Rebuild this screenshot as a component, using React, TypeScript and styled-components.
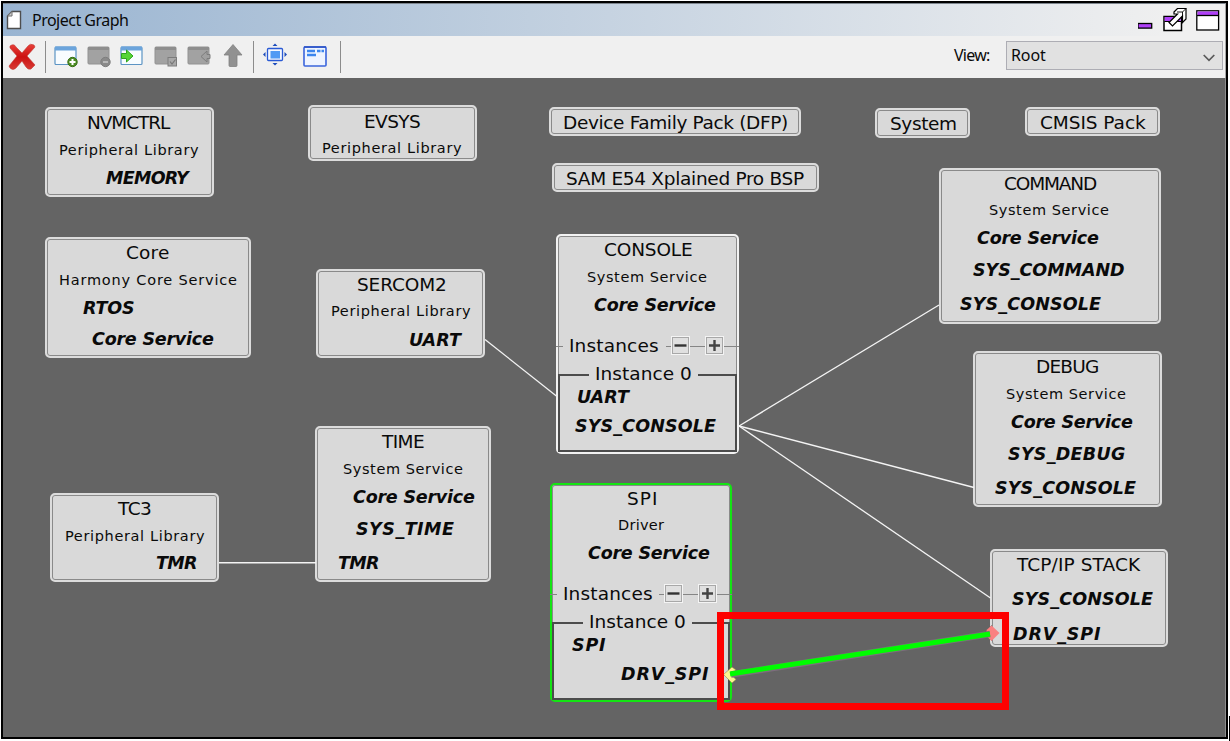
import React from 'react';
import styled, { createGlobalStyle } from 'styled-components';

const GlobalStyle = createGlobalStyle`
  html, body { margin: 0; padding: 0; background: #fff; }
  body { width: 1230px; height: 741px; overflow: hidden; }
  * { box-sizing: border-box; }
`;

const UI_FONT = '"Noto Sans", "Open Sans", sans-serif';
const GRAPH_FONT = '"DejaVu Sans", Verdana, sans-serif';

type Kind = 'ui' | 'title' | 'sub' | 'port' | 'group';

const KINDS: Record<Kind, { size: number; weight: number; slant: string; family: string; leading: number }> = {
  ui: { size: 16, weight: 400, slant: 'normal', family: UI_FONT, leading: 24 },
  title: { size: 18.5, weight: 400, slant: 'normal', family: GRAPH_FONT, leading: 26 },
  sub: { size: 14.5, weight: 400, slant: 'normal', family: GRAPH_FONT, leading: 24 },
  port: { size: 17.5, weight: 700, slant: 'italic', family: GRAPH_FONT, leading: 26 },
  group: { size: 18.5, weight: 400, slant: 'normal', family: GRAPH_FONT, leading: 24 },
};

const Glyphs = styled.span<{ $kind: Kind }>`
  display: block;
  flex: none;
  white-space: pre;
  color: #0a0a0a;
  font-family: ${(p) => KINDS[p.$kind].family};
  font-size: ${(p) => KINDS[p.$kind].size}px;
  font-weight: ${(p) => KINDS[p.$kind].weight};
  font-style: ${(p) => KINDS[p.$kind].slant};
  line-height: ${(p) => KINDS[p.$kind].leading}px;
  height: 24px;
`;

const ruler = document.createElement('canvas').getContext('2d')!;

/* Tracks a string so that its visible glyphs span exactly `width` pixels. */
function Label({ kind, text, width }: { kind: Kind; text: string; width: number }) {
  const k = KINDS[kind];
  ruler.font = `${k.slant} ${k.weight} ${k.size}px ${k.family}`;
  const m = ruler.measureText(text);
  const ink = m.actualBoundingBoxLeft + m.actualBoundingBoxRight;
  const tracking = (width - ink) / (text.length - 1);
  return (
    <Glyphs $kind={kind} style={{ letterSpacing: tracking, marginLeft: m.actualBoundingBoxLeft, width }}>
      {text}
    </Glyphs>
  );
}

const Page = styled.div`
  position: relative;
  width: 1230px;
  height: 741px;
  padding: 1px;
  background: #fff;
`;

const Window = styled.div`
  display: flex;
  flex-direction: column;
  width: 1227px;
  height: 738px;
  border: 2px solid #000;
  background: #646464;
`;

const TitleBar = styled.header`
  display: flex;
  align-items: center;
  height: 33px;
  padding: 0 5px 0 3px;
  border-top: 1px solid #7d858d;
  border-right: 1px solid #a8a8a8;
  background: linear-gradient(90deg, #99b4d1, #f0f0f0 96%);
`;

const TitleText = styled.div`
  padding-left: 11px;
`;

const WindowButtons = styled.div`
  display: flex;
  align-items: center;
  gap: 8px;
  margin-left: auto;
`;

const Toolbar = styled.div`
  display: flex;
  align-items: center;
  height: 42px;
  padding: 0 2px 1px 4px;
  background: #f0f0f0;
  border-right: 1px solid #a8a8a8;
`;

const Tool = styled.button<{ $gap?: number }>`
  display: block;
  width: 28px;
  height: 30px;
  margin: 0 0 0 ${(p) => p.$gap ?? 5}px;
  padding: 0;
  border: 0;
  background: none;
`;

const Divider = styled.i<{ $gap: number }>`
  width: 1px;
  height: 32px;
  margin-left: ${(p) => p.$gap}px;
  background: #8c8c8c;
`;

const ViewPicker = styled.div`
  display: flex;
  align-items: center;
  gap: 16px;
  margin: 0 0 3px auto;
`;

const Select = styled.div`
  display: flex;
  align-items: center;
  justify-content: space-between;
  width: 217px;
  height: 29px;
  padding: 0 7px 1px 5px;
  border: 1px solid #adadb4;
  background: #e1e1e1;
`;

const Chevron = styled.svg`
  margin-top: 6px;
`;

const Canvas = styled.main`
  position: relative;
  flex: 1;
  background: #646464;
  border-right: 1px solid #8e8e8e;
`;

const Wires = styled.svg`
  position: absolute;
  left: -3px;
  top: -78px;
  width: 1230px;
  height: 741px;
  pointer-events: none;
`;

const Node = styled.section<{ $x: number; $y: number; $w: number; $h: number; $tone: string }>`
  position: absolute;
  left: ${(p) => p.$x - 3}px;
  top: ${(p) => p.$y - 78}px;
  width: ${(p) => p.$w}px;
  height: ${(p) => p.$h}px;
  display: flex;
  flex-direction: column;
  border: 2px solid ${(p) => p.$tone};
  border-radius: 5px;
  background: #d9d9d9;
  box-shadow: inset 0 0 0 1px #8a8a8a;
`;

const Row = styled.div<{ $indent: number; $gap: number }>`
  display: flex;
  height: 24px;
  flex: none;
  margin-top: ${(p) => p.$gap}px;
  padding-left: ${(p) => p.$indent}px;
`;

const Instances = styled.div`
  display: flex;
  align-items: center;
  height: 24px;
  flex: none;
  margin: 18px -2px 0;
`;

const Rule = styled.i<{ $w?: number; $dark?: boolean }>`
  flex: ${(p) => (p.$w ? 'none' : '1')};
  width: ${(p) => p.$w ?? 0}px;
  height: ${(p) => (p.$dark ? 2 : 1)}px;
  margin-top: 1px;
  background: ${(p) => (p.$dark ? '#4c4c4c' : '#858585')};
`;

const Spacer = styled.i<{ $w: number }>`
  flex: none;
  width: ${(p) => p.$w}px;
`;

const Step = styled.button`
  display: flex;
  align-items: center;
  justify-content: center;
  flex: none;
  width: 19px;
  height: 19px;
  margin-bottom: 1px;
  padding: 0;
  border: 1px solid #f4f4f4;
  background: #e0e0e0;
  box-shadow: inset 0 0 0 1px #a8a8a8;
`;

const InstanceBox = styled.div`
  position: relative;
  flex: 1;
  margin: 16px 0 0;
  border: solid #4c4c4c;
  border-width: 0 2px 2px;
`;

const Legend = styled.div`
  display: flex;
  align-items: center;
  height: 24px;
  margin: -12px 0 0;
`;

const Highlight = styled.div`
  position: absolute;
  left: 717px;
  top: 612px;
  width: 292px;
  height: 98px;
  border: 7px solid #fe0000;
`;

const Caret = styled.i`
  position: absolute;
  left: 1229px;
  top: 716px;
  width: 1px;
  height: 25px;
  background: #000;
`;

/* [kind, text, indent from the node's left edge, gap above, drawn width] */
type Line = [Kind, string, number, number, number];

interface NodeSpec {
  x: number;
  y: number;
  w: number;
  h: number;
  tone?: string;
  lines: Line[];
  instance?: { lead: number; ports: Line[] };
}

const NODES: NodeSpec[] = [
  { x: 45, y: 107, w: 169, h: 90, lines: [['title', 'NVMCTRL', 43, 1, 83], ['sub', 'Peripheral Library', 15, 4, 139], ['port', 'MEMORY', 61, 3, 85]] },
  { x: 45, y: 237, w: 206, h: 121, lines: [['title', 'Core', 82, 1, 42], ['sub', 'Harmony Core Service', 15, 4, 177], ['port', 'RTOS', 38, 3, 51], ['port', 'Core Service', 47, 7, 122]] },
  { x: 308, y: 105, w: 169, h: 56, lines: [['title', 'EVSYS', 57, 2, 55], ['sub', 'Peripheral Library', 15, 3, 139]] },
  { x: 316, y: 269, w: 169, h: 89, lines: [['title', 'SERCOM2', 42, 1, 87], ['sub', 'Peripheral Library', 16, 3, 139], ['port', 'UART', 94, 4, 53]] },
  { x: 549, y: 107, w: 252, h: 29, lines: [['title', 'Device Family Pack (DFP)', 15, 1, 223]] },
  { x: 552, y: 163, w: 267, h: 29, lines: [['title', 'SAM E54 Xplained Pro BSP', 15, 1, 237]] },
  { x: 875, y: 108, w: 95, h: 30, lines: [['title', 'System', 16, 1, 65]] },
  { x: 1025, y: 107, w: 135, h: 29, lines: [['title', 'CMSIS Pack', 16, 1, 105]] },
  {
    x: 556, y: 234, w: 183, h: 220, tone: '#f2f2f2',
    lines: [['title', 'CONSOLE', 49, 1, 87], ['sub', 'System Service', 31, 4, 120], ['port', 'Core Service', 38, 3, 122]],
    instance: { lead: 9, ports: [['port', 'UART', 20, -2, 53], ['port', 'SYS_CONSOLE', 17, 5, 141]] },
  },
  {
    x: 550, y: 483, w: 182, h: 219, tone: '#14e414',
    lines: [['title', 'SPI', 78, 1, 28], ['sub', 'Driver', 69, 3, 45], ['port', 'Core Service', 38, 3, 122]],
    instance: { lead: 8, ports: [['port', 'SPI', 20, -2, 34], ['port', 'DRV_SPI', 69, 5, 88]] },
  },
  { x: 939, y: 168, w: 222, h: 156, lines: [['title', 'COMMAND', 66, 1, 92], ['sub', 'System Service', 50, 3, 120], ['port', 'Core Service', 38, 3, 122], ['port', 'SYS_COMMAND', 34, 8, 151], ['port', 'SYS_CONSOLE', 21, 10, 141]] },
  { x: 973, y: 351, w: 189, h: 156, lines: [['title', 'DEBUG', 64, 1, 61], ['sub', 'System Service', 33, 4, 120], ['port', 'Core Service', 38, 3, 122], ['port', 'SYS_DEBUG', 35, 8, 117], ['port', 'SYS_CONSOLE', 22, 10, 141]] },
  { x: 990, y: 549, w: 178, h: 98, lines: [['title', 'TCP/IP STACK', 26, 1, 125], ['port', 'SYS_CONSOLE', 22, 10, 141], ['port', 'DRV_SPI', 23, 11, 88]] },
  { x: 50, y: 493, w: 169, h: 89, lines: [['title', 'TC3', 67, 1, 34], ['sub', 'Peripheral Library', 16, 4, 139], ['port', 'TMR', 106, 2, 40]] },
  { x: 315, y: 426, w: 176, h: 156, lines: [['title', 'TIME', 66, 1, 43], ['sub', 'System Service', 28, 4, 120], ['port', 'Core Service', 38, 3, 122], ['port', 'SYS_TIME', 41, 8, 98], ['port', 'TMR', 23, 10, 40]] },
];

const renderLine = ([kind, text, indent, gap, width]: Line) => (
  <Row key={text} $indent={indent - 2} $gap={gap}>
    <Label kind={kind} text={text} width={width} />
  </Row>
);

function GraphNode({ spec }: { spec: NodeSpec }) {
  return (
    <Node $x={spec.x} $y={spec.y} $w={spec.w} $h={spec.h} $tone={spec.tone ?? '#dcdcdc'}>
      {spec.lines.map(renderLine)}
      {spec.instance && (
        <>
          <Instances>
            <Rule $w={7} />
            <Spacer $w={7} />
            <Label kind="group" text="Instances" width={88} />
            <Spacer $w={spec.instance.lead} />
            <Rule $w={5} />
            <Step aria-label="Remove instance">
              <svg width="13" height="13"><path d="M0.5 6.5h12" stroke="#333" strokeWidth="2.4" /></svg>
            </Step>
            <Rule $w={15} />
            <Step aria-label="Add instance">
              <svg width="13" height="13"><path d="M1 6.5h11M6.5 1v11" stroke="#444" strokeWidth="2.4" /></svg>
            </Step>
            <Rule />
          </Instances>
          <InstanceBox>
            <Legend>
              <Rule $w={29} $dark />
              <Spacer $w={7} />
              <Label kind="group" text="Instance 0" width={95} />
              <Spacer $w={8} />
              <Rule $dark />
            </Legend>
            {spec.instance.ports.map(renderLine)}
          </InstanceBox>
        </>
      )}
    </Node>
  );
}

const WINDOW_FRAME = (
  <>
    <rect x="1" y="5" width="21" height="17.500" rx="1" fill="#f8fcff" stroke="#5c94c4" strokeWidth="1.2" />
    <rect x="1" y="4.500" width="21" height="4" fill="#6ba4dc" />
  </>
);
const DISABLED_FRAME = <path d="M1 6q0-1 1-1h19q1 0 1 1v15q0 1-1 1H2q-1 0-1-1z" fill="#a2a2a2" stroke="#929292" />;
const DISABLED_TOP = <path d="M1 5h21v3H1z" fill="#8e8e8e" />;

function Tools() {
  return (
    <>
      <Tool $gap={1} aria-label="Delete">
        <svg width="28" height="30" viewBox="0 0 28 30">
          <defs>
            <linearGradient id="red" x1="0" y1="0" x2="0" y2="1">
              <stop offset="0" stopColor="#e8403a" />
              <stop offset="0.5" stopColor="#cc1212" />
              <stop offset="1" stopColor="#d83a34" />
            </linearGradient>
          </defs>
          <path d="M2 4q4-3 6 1l6 6 6-7q2-3 6-1l1 2-8 9 8 9-4 4q-3 1-5-2l-4-6-6 7q-3 3-6 0l-1-2 8-10-7-8z" fill="url(#red)" stroke="#c03a34" strokeWidth="0.6" />
        </svg>
      </Tool>
      <Divider $gap={9} />
      <Tool $gap={8} aria-label="New group">
        <svg width="28" height="30" viewBox="0 0 28 30">
          {WINDOW_FRAME}
          <circle cx="18.500" cy="20" r="4.700" fill="#4c8c22" stroke="#366e12" />
          <path d="M15.500 20h6M18.500 17v6" stroke="#fff" strokeWidth="2" />
        </svg>
      </Tool>
      <Tool aria-label="Remove group">
        <svg width="28" height="30" viewBox="0 0 28 30">
          {DISABLED_FRAME}{DISABLED_TOP}
          <circle cx="18.500" cy="20" r="4.700" fill="#8a8a8a" stroke="#7e7e7e" />
          <path d="M16 20h5" stroke="#c4c4c4" strokeWidth="1.600" />
        </svg>
      </Tool>
      <Tool aria-label="Import">
        <svg width="28" height="30" viewBox="0 0 28 30">
          {WINDOW_FRAME}
          <path d="M1.500 11.500h5V8l6.500 6-6.500 6v-3.500h-5z" fill="#55d535" stroke="#2fa51d" />
        </svg>
      </Tool>
      <Tool $gap={6} aria-label="Select group">
        <svg width="28" height="30" viewBox="0 0 28 30">
          {DISABLED_FRAME}{DISABLED_TOP}
          <rect x="14" y="15.500" width="8.500" height="8.500" fill="#a8a8a8" stroke="#7c7c7c" />
          <path d="M16 19.500l2 2.500 3.500-4.500" fill="none" stroke="#777" strokeWidth="1.200" />
        </svg>
      </Tool>
      <Tool aria-label="Export">
        <svg width="28" height="30" viewBox="0 0 28 30">
          {DISABLED_FRAME}{DISABLED_TOP}
          <path d="M14 14.500l6-5.500v3.500h3v4h-3V20z" fill="#a0a0a0" stroke="#7d7d7d" />
        </svg>
      </Tool>
      <Tool $gap={7} aria-label="Up">
        <svg width="28" height="30" viewBox="0 0 28 30">
          <path d="M11 2.500l9 10.500h-5V23.500q0 1-1 1H8q-1 0-1-1V13H2z" fill="#919191" stroke="#828282" strokeWidth="0.800" />
        </svg>
      </Tool>
      <Divider $gap={3} />
      <Tool $gap={8} aria-label="Fit to view">
        <svg width="28" height="30" viewBox="0 0 28 30">
          <rect x="5.500" y="6.500" width="15" height="12" rx="1" fill="#f4f8ff" stroke="#2a5ad4" strokeWidth="1.300" />
          <rect x="8.500" y="9" width="9.500" height="7.500" fill="#4f9af4" />
          <path d="M13 1.500l2.500 2.500h-5zM13 23.500l2.500-2.500h-5zM1 12.500l2.500-2.500v5zM25 12.500l-2.500-2.500v5z" fill="#1c4cbc" />
        </svg>
      </Tool>
      <Tool $gap={12} aria-label="Properties">
        <svg width="28" height="30" viewBox="0 0 28 30">
          <rect x="2" y="5" width="22" height="19" rx="1" fill="#eef4ff" stroke="#3a64dc" strokeWidth="1.600" />
          <path d="M2 5h22" stroke="#2a50c4" strokeWidth="1.500" />
          <path d="M5 9h8M15 9h3.500M19.500 9h2.500M5 13h9" stroke="#3c86ee" strokeWidth="2.400" />
        </svg>
      </Tool>
      <Divider $gap={10} />
    </>
  );
}

export default function App() {
  return (
    <Page>
      <GlobalStyle />
      <Window>
        <TitleBar>
          <svg width="16" height="20" viewBox="0 0 16 20">
            <path d="M6 1.500h8.500v17H1.500V6z" fill="#fff" stroke="#4e4e4e" strokeWidth="1.400" />
            <path d="M6 1.500V6H1.500z" fill="#cfcfcf" stroke="#6e6e6e" />
          </svg>
          <TitleText><Label kind="ui" text="Project Graph" width={95} /></TitleText>
          <WindowButtons>
            <svg width="16" height="24" viewBox="0 0 16 24">
              <rect x="0" y="15.500" width="13.700" height="4.600" fill="#b040f8" stroke="#000" strokeWidth="1.300" />
            </svg>
            <svg width="26" height="24" viewBox="0 0 26 24">
              <rect x="2" y="8.500" width="17.500" height="14" fill="#fff" stroke="#000" strokeWidth="1.500" />
              <rect x="2.700" y="9" width="16" height="4" fill="#b040f8" />
              <path d="M2.500 13.500H19" stroke="#000" />
              <path d="M12 4l3.500-3.500h8.500v10.500l-3.500 3.500V8L10.500 18 7 14.500 15.500 6H12z" fill="#fff" stroke="#000" strokeWidth="1.200" />
              <path d="M15 4h5.500V8M20.500 4L24 .500" fill="none" stroke="#000" strokeWidth="0.900" />
            </svg>
            <svg width="24" height="24" viewBox="0 0 24 24">
              <rect x="0.800" y="2.800" width="21.800" height="19.200" fill="#fff" stroke="#000" strokeWidth="1.300" />
              <rect x="1.500" y="3.500" width="20.500" height="3.500" fill="#b040f8" />
              <path d="M1 7.500h21.500" stroke="#000" strokeWidth="1.300" />
            </svg>
          </WindowButtons>
        </TitleBar>
        <Toolbar>
          <Tools />
          <ViewPicker>
            <Label kind="ui" text="View:" width={36} />
            <Select>
              <Label kind="ui" text="Root" width={34} />
              <Chevron width="12" height="8" viewBox="0 0 12 8">
                <path d="M0.700 1l5.300 5.300L11.300 1" fill="none" stroke="#5a5a5a" strokeWidth="1.700" />
              </Chevron>
            </Select>
          </ViewPicker>
        </Toolbar>
        <Canvas>
          {NODES.map((n) => <GraphNode key={n.lines[0][1]} spec={n} />)}
          <Wires viewBox="0 0 1230 741">
            <g stroke="#f4f4f4" strokeWidth="1.300" fill="none">
              <path d="M485 339.500L557 396.500" />
              <path d="M739 426L939 305" />
              <path d="M739 426L974 487.500" />
              <path d="M739 426L990.500 598" />
              <path d="M219 562.700H316" strokeWidth="1.500" />
            </g>
            <path d="M984 633l8-8v4l-4 4 4 5v3z" fill="#3c3c3c" />
            <path d="M991.500 625.500l8 7.500-8 8-5-5v-6z" fill="#fa8080" />
            <path d="M732 667l-8.500 7.500 8.500 8.500 4-3.500-5-5 5-4.500z" fill="#fbf590" stroke="#8a8648" strokeWidth="0.600" />
            <path d="M731 674.500L990 634" stroke="#7d6d7d" strokeWidth="6.500" />
            <path d="M730 674L990 634" stroke="#00fc00" strokeWidth="5" />
          </Wires>
        </Canvas>
      </Window>
      <Highlight />
      <Caret />
    </Page>
  );
}
